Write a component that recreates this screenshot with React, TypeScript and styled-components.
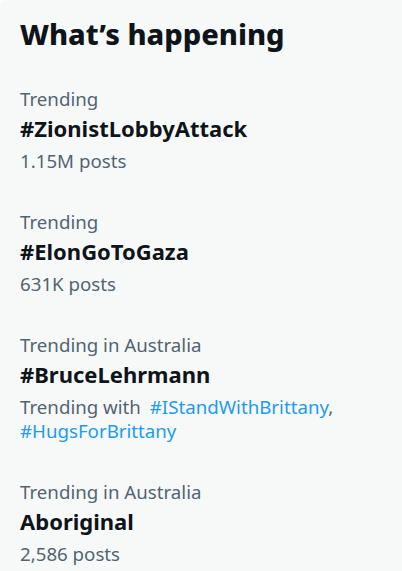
import React from "react";
import styled, { createGlobalStyle } from "styled-components";

type TrendType = {
  meta: string;
  title: string;
  posts?: string;
  related?: string[];
};

const trends: TrendType[] = [
  { meta: "Trending", title: "#ZionistLobbyAttack", posts: "1.15M posts" },
  { meta: "Trending", title: "#ElonGoToGaza", posts: "631K posts" },
  {
    meta: "Trending in Australia",
    title: "#BruceLehrmann",
    related: ["#IStandWithBrittany", "#HugsForBrittany"],
  },
  { meta: "Trending in Australia", title: "Aboriginal", posts: "2,586 posts" },
];

const GlobalStyle = createGlobalStyle`
  html, body {
    margin: 0;
    padding: 0;
    background: #ffffff;
  }
  body {
    font-family: "Noto Sans", "Open Sans", sans-serif;
  }
`;

export default function App() {
  return (
    <>
      <GlobalStyle />
      <Panel>
        <Header>What’s happening</Header>
        {trends.map((t) => (
          <TrendItem key={t.title}>
            <Meta>{t.meta}</Meta>
            <Title>{t.title}</Title>
            {t.posts && <Posts>{t.posts}</Posts>}
            {t.related && (
              <Posts>
                Trending with <Link $gap>{t.related[0]}</Link>,{" "}
                <Link>{t.related[1]}</Link>
              </Posts>
            )}
          </TrendItem>
        ))}
      </Panel>
    </>
  );
}

const Panel = styled.div`
  width: 402px;
  height: 571px;
  background: #f7f9f9;
  border-top-left-radius: 6px;
  overflow: hidden;
  box-sizing: border-box;
`;

const Header = styled.h2`
  margin: 0;
  padding: 14px 20px 14px;
  font-size: 29px;
  line-height: 40px;
  font-weight: 800;
  color: #0f1419;
`;

const TrendItem = styled.div`
  padding: 17px 20px 18px;
  display: flex;
  flex-direction: column;
`;

const Meta = styled.div`
  font-size: 18.7px;
  line-height: 28px;
  color: #536471;
`;

const Title = styled.div`
  font-size: 22px;
  line-height: 31px;
  font-weight: 700;
  color: #0f1419;
`;

const Posts = styled.div`
  margin-top: 5px;
  font-size: 18.7px;
  line-height: 24px;
  color: #536471;
`;

const Link = styled.span<{ $gap?: boolean }>`
  margin-left: ${(p) => (p.$gap ? "4px" : "0")};
  color: #1d9bf0;
`;
